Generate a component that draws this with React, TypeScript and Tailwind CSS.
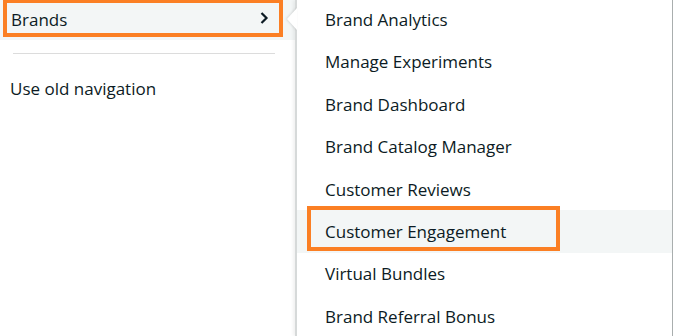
import React from "react";

const items = [
  "Brand Analytics",
  "Manage Experiments",
  "Brand Dashboard",
  "Brand Catalog Manager",
  "Customer Reviews",
  "Customer Engagement",
  "Virtual Bundles",
  "Brand Referral Bonus",
];

export default function App() {
  return (
    <div
      className="relative flex w-[673px] h-[336px] overflow-hidden bg-white text-[17px] text-[#0c1b24]"
      style={{ fontFamily: '"Open Sans", "Noto Sans", sans-serif' }}
    >
      {/* Left column */}
      <div className="flex w-[295px] shrink-0 flex-col">
        <div className="relative h-[40px] bg-[#f3f6f6]">
          <div className="flex h-[39px] items-center justify-between pl-[11px] pr-[26px]">
            <span>Brands</span>
            <svg width="9" height="12" viewBox="0 0 9 12" className="mt-[-3px]">
              <polyline points="1.5,1 6.5,6 1.5,11" fill="none" stroke="#0c1b24" strokeWidth="2.2" />
            </svg>
          </div>
          <div className="absolute left-[3px] top-[-1px] h-[38px] w-[280px] border-4 border-[#fb7f24]" />
        </div>
        <div className="ml-[13px] mt-[13px] h-px w-[262px] bg-[#dcdcdc]" />
        <div className="mt-[23px] pl-[10px] leading-[24px]">Use old navigation</div>
      </div>

      {/* Right panel */}
      <div className="relative flex flex-1 flex-col border-l-2 border-r border-l-[#d6d9d9] border-r-[#a9aeae] shadow-[-2px_0_3px_rgba(0,0,0,0.06)]">
        <div className="mt-[-1.5px] flex flex-col">
          {items.map((t) => (
            <div
              key={t}
              className={
                t === "Customer Engagement"
                  ? "relative flex h-[42.4px] items-center bg-[#f3f6f6] pl-[28px]"
                  : "relative flex h-[42.4px] items-center pl-[28px]"
              }
            >
              <span>{t}</span>
              {t === "Customer Engagement" && (
                <div className="absolute left-[10px] top-[-4px] h-[45px] w-[253px] border-[4.5px] border-[#fb7f24]" />
              )}
            </div>
          ))}
        </div>
      </div>

      {/* Popover notch */}
      <svg
        width="12"
        height="24"
        viewBox="0 0 12 24"
        className="absolute left-[286px] top-[7px]"
        style={{ filter: "drop-shadow(-1px 0 1px rgba(0,0,0,0.12))" }}
      >
        <polygon points="11,1 1,12 11,23" fill="#ffffff" />
      </svg>
    </div>
  );
}
